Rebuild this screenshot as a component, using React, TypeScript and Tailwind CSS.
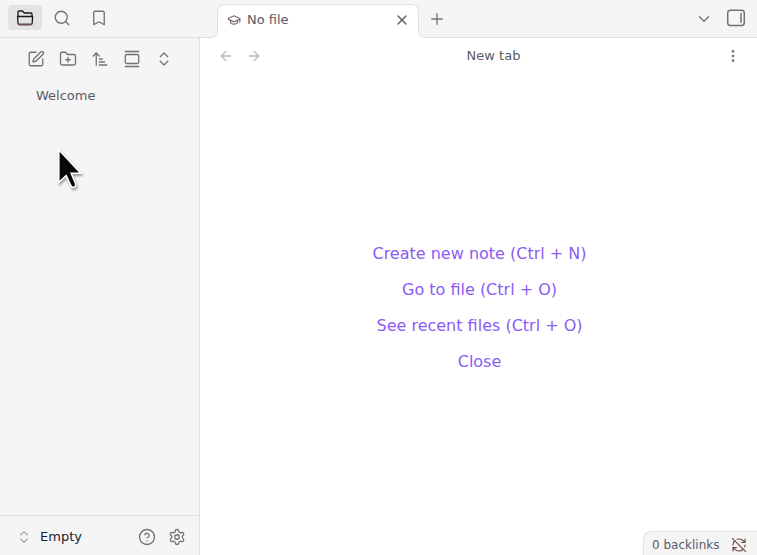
import React from "react";
import {
  ArrowLeft, ArrowRight, ArrowUpNarrowWide, Bookmark, ChevronDown, ChevronsUpDown,
  CircleHelp, EllipsisVertical, FolderPlus, GalleryVertical, GraduationCap, Plus,
  RefreshCwOff, Search, Settings, SquarePen, X,
} from "lucide-react";

const links = ["Create new note (Ctrl + N)", "Go to file (Ctrl + O)", "See recent files (Ctrl + O)", "Close"];
const tools = [SquarePen, FolderPlus, ArrowUpNarrowWide, GalleryVertical, ChevronsUpDown];

function FilesIcon() {
  return (
    <svg width="18" height="18" viewBox="0 0 18 18" fill="none" stroke="#171717" strokeWidth="1.3" strokeLinejoin="round" strokeLinecap="round">
      <path d="M2 7.500V3q0-1 1-1h3.5L8.3 4H15q1 0 1 1v2.500" />
      <path d="M1.6 7.500h15l-.4 6.500q-.1 1.5-1.4 1.5H3.4Q2.1 15.500 2 14z" />
      <path d="M3 15.500h12" stroke="#704f50" />
    </svg>
  );
}

function PanelIcon() {
  return (
    <svg width="20" height="18" viewBox="0 0 20 18" fill="none" stroke="#78706e" strokeWidth="1.5" strokeLinecap="round">
      <rect x="1.7" y="1.2" width="16.6" height="15.4" rx="2.8" />
      <path d="M15 4.600v8.600" />
    </svg>
  );
}

function TabFoot({ flip = false }: { flip?: boolean }) {
  return (
    <svg className={flip ? "absolute -right-[7px] bottom-0 -scale-x-100" : "absolute -left-[7px] bottom-0"} width="7" height="7" viewBox="0 0 7 7" fill="none">
      <path d="M0 7V6.5Q6.5 6.5 6.5 0H7V7z" fill="#fff" />
      <path d="M0 6.5Q6.5 6.5 6.5 0" stroke="#e0e0e0" />
    </svg>
  );
}

function Cursor() {
  return (
    <svg className="absolute left-[55px] top-[145px] drop-shadow-[1px_2px_1px_rgba(60,40,35,0.45)]" width="30" height="47" viewBox="0 0 30 46" preserveAspectRatio="none">
      <path d="M3 3V38.5L10.8 31.2L15.2 40.7Q16.6 43.2 19.3 42Q22.4 40.5 21.400 37.8L17.4 28.5H28z" fill="#fff" />
      <path d="M4.600 6.500V35L11.400 28.6L16.6 39.7Q17.5 41.2 19 40.5Q20.500 39.6 19.9 38.2L15 26.8H24z" fill="#080808" />
    </svg>
  );
}

export default function App() {
  return (
    <div className="relative flex h-[555px] w-[757px] flex-col overflow-hidden bg-white font-['DejaVu_Sans',sans-serif] text-[13px] text-[#595a67]">
      <header className="flex h-[38px] shrink-0 border-b border-[#e0e0e0] bg-[#f5f5f5] text-[#78706e]">
        <div className="flex w-[217px] gap-[3px] pl-2 pt-[5px]">
          <div className="flex h-[25px] w-[34px] items-center justify-center rounded bg-[#e3e3e3]"><FilesIcon /></div>
          <div className="flex h-[26px] w-[34px] items-center justify-center"><Search size={18} strokeWidth={1.75} /></div>
          <div className="flex h-[26px] w-[34px] items-center justify-center"><Bookmark size={18} strokeWidth={1.75} /></div>
        </div>
        <div className="relative -mb-px mt-1 flex h-[34px] w-[202px] items-center rounded-t-[7px] border border-b-0 border-[#e0e0e0] bg-white pb-[3px] pl-[9px] pr-2">
          <TabFoot /><TabFoot flip />
          <GraduationCap size={14} strokeWidth={2} />
          <span className="ml-[6px] pb-[2px] text-[13px] leading-none text-[#595a67]">No file</span>
          <X className="ml-auto text-[#655a58]" size={16} strokeWidth={2} />
        </div>
        <Plus className="ml-[9px] mt-[10px]" size={18} strokeWidth={1.75} />
        <ChevronDown className="ml-auto mt-[10px]" size={18} strokeWidth={1.75} />
        <div className="ml-[13px] mr-[11px] mt-[9px]"><PanelIcon /></div>
      </header>
      <div className="flex min-h-0 flex-1">
        <aside className="flex w-[200px] shrink-0 flex-col border-r border-[#e0e0e0] bg-[#f5f5f5]">
          <div className="flex gap-[14px] pl-[27px] pt-3 text-[#78706e]">
            {tools.map((Tool, i) => <Tool key={i} size={18} strokeWidth={1.75} />)}
          </div>
          <div className="pl-9 pt-[18px] leading-5">Welcome</div>
          <footer className="mt-auto flex h-10 items-center border-t border-[#e0e0e0] pl-4 pt-[3px] text-[#78706e]">
            <ChevronsUpDown className="text-[#aaa5a3]" size={16} strokeWidth={1.75} />
            <span className="ml-2 w-[98px] text-[#20222c]">Empty</span>
            <CircleHelp size={18} strokeWidth={1.75} />
            <Settings className="ml-3" size={18} strokeWidth={1.75} />
          </footer>
        </aside>
        <main className="flex flex-1 flex-col">
          <div className="flex h-9 items-center px-[18px]">
            <div className="flex w-[60px] gap-3 text-[#b9b9b9]">
              <ArrowLeft size={16} strokeWidth={1.9} />
              <ArrowRight size={16} strokeWidth={1.9} />
            </div>
            <div className="flex-1 text-center">New tab</div>
            <EllipsisVertical className="ml-4 -mr-[2px] text-[#78706e]" size={16} strokeWidth={2} />
          </div>
          <div className="flex flex-1 flex-col items-center gap-3 pt-[168px] text-[16px] leading-6 text-[#8a5cf5]">
            {links.map((link) => <button key={link} className="block pl-[2px]">{link}</button>)}
          </div>
          <div className="flex h-6 w-[114px] items-center self-end rounded-tl-lg border-l border-t border-[#e0e0e0] bg-[#f5f5f5] pl-2 pt-[2px] text-[12px]">
            <span>0 backlinks</span>
            <RefreshCwOff className="ml-3 text-[#704a43]" size={16} strokeWidth={1.75} />
          </div>
        </main>
      </div>
      <Cursor />
    </div>
  );
}
